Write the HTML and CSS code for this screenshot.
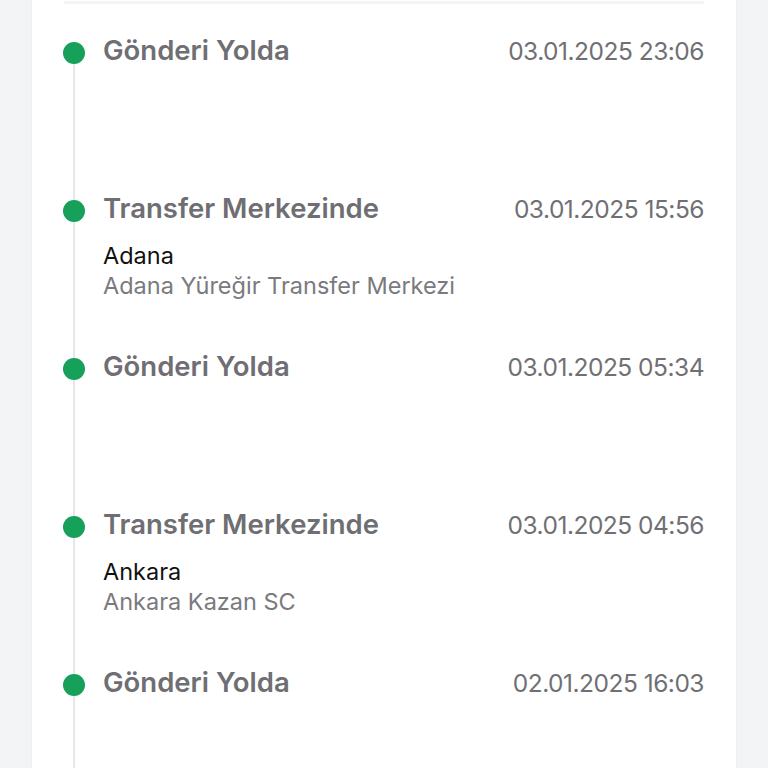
FILE: index.html
```html
<!DOCTYPE html>
<html lang="tr">
<head>
  <meta charset="UTF-8">
  <meta name="viewport" content="width=device-width, initial-scale=1.0">
  <title>Gönderi Hareketleri</title>
  <link rel="stylesheet" href="styles.css">
</head>
<body>
  <div class="card">
    <div class="divider"></div>
    <ul class="timeline">
      <li class="event">
        <div class="rail"><span class="dot"></span></div>
        <div class="event-body">
          <div class="event-head">
            <span class="event-title">Gönderi Yolda</span>
            <span class="event-date">03.01.2025 23:06</span>
          </div>
        </div>
      </li>
      <li class="event">
        <div class="rail"><span class="dot"></span></div>
        <div class="event-body">
          <div class="event-head">
            <span class="event-title">Transfer Merkezinde</span>
            <span class="event-date">03.01.2025 15:56</span>
          </div>
          <div class="event-city">Adana</div>
          <div class="event-place">Adana Yüreğir Transfer Merkezi</div>
        </div>
      </li>
      <li class="event">
        <div class="rail"><span class="dot"></span></div>
        <div class="event-body">
          <div class="event-head">
            <span class="event-title">Gönderi Yolda</span>
            <span class="event-date">03.01.2025 05:34</span>
          </div>
        </div>
      </li>
      <li class="event">
        <div class="rail"><span class="dot"></span></div>
        <div class="event-body">
          <div class="event-head">
            <span class="event-title">Transfer Merkezinde</span>
            <span class="event-date">03.01.2025 04:56</span>
          </div>
          <div class="event-city">Ankara</div>
          <div class="event-place">Ankara Kazan SC</div>
        </div>
      </li>
      <li class="event">
        <div class="rail"><span class="dot"></span></div>
        <div class="event-body">
          <div class="event-head">
            <span class="event-title">Gönderi Yolda</span>
            <span class="event-date">02.01.2025 16:03</span>
          </div>
        </div>
      </li>
    </ul>
  </div>
</body>
</html>
```

FILE: styles.css
```css
body {
  margin: 0;
  background-color: #f3f4f6;
  font-family: Inter, "Noto Sans", sans-serif;
  height: 768px;
  overflow: hidden;
}
.card {
  margin: 0 32px;
  padding: 0 32px;
  background-color: #fff;
  min-height: 768px;
  box-shadow: 0 0 2px rgba(0, 0, 0, 0.06);
}
.divider {
  height: 3px;
  padding-top: 1px;
  background-color: #f3f4f6;
  background-clip: content-box;
}
.timeline {
  list-style: none;
  margin: 0;
  padding: 0;
}
.event {
  display: flex;
  gap: 18px;
  min-height: 158px;
}
.rail {
  flex: none;
  width: 22px;
  margin-left: -1px;
  background: linear-gradient(#e5e7eb, #e5e7eb) no-repeat center top / 2px 100%;
}
.event:first-child .rail {
  background-position: center 50px;
}
.dot {
  display: block;
  width: 22px;
  height: 22px;
  margin-top: 38px;
  border-radius: 50%;
  background-color: #16a05a;
}
.event-body {
  flex: 1;
  padding-top: 30px;
}
.event-head {
  display: flex;
  justify-content: space-between;
  align-items: baseline;
  line-height: 32px;
  margin-bottom: 16px;
}
.event-title {
  font-size: 27.5px;
  font-weight: 600;
  color: #6e6e73;
}
.event-date {
  font-size: 24.5px;
  letter-spacing: -0.5px;
  color: #707074;
}
.event-city,
.event-place {
  font-size: 23.5px;
  line-height: 30px;
}
.event-city {
  color: #111;
}
.event-place {
  color: #7a7a7e;
}
```
